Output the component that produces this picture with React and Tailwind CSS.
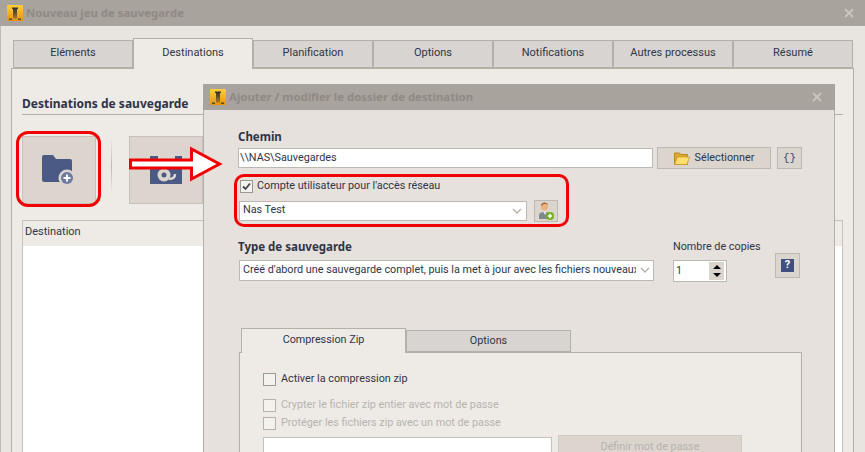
// App.jsx
const body = { fontFamily: 'Roboto, Tahoma, sans-serif' }
const bold = { fontFamily: '"Noto Sans", Tahoma, sans-serif' }

function Logo({ id }) {
  return (
    <svg width="16" height="16" viewBox="0 0 16 16" className="shrink-0">
      <defs>
        <linearGradient id={`${id}Fill`} x1="0" y1="0" x2="0" y2="1">
          <stop offset="0" stopColor="#ffcf3a" />
          <stop offset="1" stopColor="#e8920f" />
        </linearGradient>
        <linearGradient id={`${id}Stem`} x1="0" y1="0" x2="0" y2="1">
          <stop offset="0" stopColor="#2f2e2b" />
          <stop offset="1" stopColor="#a8762a" />
        </linearGradient>
      </defs>
      <rect width="16" height="16" rx="1" fill={`url(#${id}Fill)`} />
      <path d="M5 2.500h6v1.500h-1v9.500h-4v-9.500h-1z" fill={`url(#${id}Stem)`} />
      <path d="M2 13.500h3v1.500h-3zM11 13.500h3v1.500h-3z" fill="#5c4a2a" />
    </svg>
  )
}

function CloseIcon({ className }) {
  return (
    <svg width="10" height="10" viewBox="0 0 10 10" className={className}>
      <path d="M1 1l8 8M9 1l-8 8" stroke="#c9c5bf" strokeWidth="1.800" fill="none" />
    </svg>
  )
}

function Chevron() {
  return (
    <svg width="10" height="6" viewBox="0 0 10 6">
      <path d="M1 1l4 4 4-4" stroke="#b3b0ac" strokeWidth="1.300" fill="none" />
    </svg>
  )
}

function FolderPlus() {
  return (
    <svg width="34" height="30" viewBox="0 0 34 30">
      <path d="M0 2a2 2 0 0 1 2-2h9l3 4h14a2 2 0 0 1 2 2v20a1 1 0 0 1-1 1H2a2 2 0 0 1-2-2z" fill="#4a5a85" />
      <circle cx="25" cy="23" r="8.500" fill="#dcd5ce" />
      <circle cx="25" cy="23" r="6" fill="#6d7ba0" />
      <path d="M25 19.500v7M21.500 23h7" stroke="#fff" strokeWidth="2" />
    </svg>
  )
}

function Floppy() {
  return (
    <svg width="32" height="28" viewBox="0 0 32 28">
      <path d="M0 0h32v28H0z" fill="#4a5a85" />
      <path d="M8 0h17v8H8z" fill="#dcd5ce" />
      <circle cx="14" cy="19" r="6.500" fill="#dcd5ce" />
      <circle cx="14" cy="19" r="2.500" fill="#4a5a85" />
      <path d="M19 23c3 0 6-1 6-5" stroke="#dcd5ce" strokeWidth="2.500" fill="none" />
    </svg>
  )
}

function FolderYellow() {
  return (
    <svg width="16" height="13" viewBox="0 0 16 13" className="shrink-0">
      <path d="M0.500 1h5l1.500 1.500h6.500v10h-13z" fill="#dba92c" stroke="#b9871a" />
      <path d="M3.500 5h12l-2.500 7.500h-12.500z" fill="#ffdf70" stroke="#c99a25" strokeWidth="0.800" />
    </svg>
  )
}

function UserAdd() {
  return (
    <svg width="16" height="18" viewBox="0 0 16 18">
      <path d="M1 17v-4c0-2 2-3 6-3s5 1 5 3v4z" fill="#7d8a8c" />
      <path d="M5.500 10h3l-1.500 3z" fill="#eee" />
      <circle cx="6.500" cy="5" r="3.500" fill="#eab27c" />
      <path d="M3 4.500c0-3 1.500-4 3.500-4s3.500 1 3.500 3l-1.500-1.500h-3z" fill="#a0652e" />
      <circle cx="12" cy="14" r="4" fill="#6fae1c" />
      <path d="M12 11.800v4.400M9.800 14h4.400" stroke="#fff" strokeWidth="1.500" />
    </svg>
  )
}

function Checkbox({ checked, muted }) {
  return (
    <span className={`flex w-[13px] h-[13px] shrink-0 items-center justify-center border bg-[#f4f2ef] ${muted ? 'border-[#b5b1ac]' : 'border-[#9c9892]'}`}>
      {checked && (
        <svg width="11" height="11" viewBox="0 0 11 11">
          <path d="M2 5.500l2.500 2.500 4.500-5.500" stroke="#44464f" strokeWidth="1.800" fill="none" />
        </svg>
      )}
    </span>
  )
}

const mainTabs = ['Eléments', 'Destinations', 'Planification', 'Options', 'Notifications', 'Autres processus', 'Résumé']

function MainWindow() {
  return (
    <div className="flex h-[452px] flex-col bg-[#e8e4df]">
      <div className="flex h-[26px] shrink-0 items-center bg-[#a8a39c] pl-[7px] pr-[11px]">
        <Logo id="mainLogo" />
        <span className="ml-[3px] text-[11.400px] font-bold text-[#8f8a84]" style={bold}>Nouveau jeu de sauvegarde</span>
        <CloseIcon className="ml-auto" />
      </div>
      <div className="flex flex-1 flex-col overflow-hidden border-l border-[#bdb9b3] pl-[10px] pr-[11px] pt-[11px]">
        <div className="z-10 flex h-[31px] shrink-0 items-end pl-[2px] text-[11px] text-[#2f3446]">
          {mainTabs.map((tab) => tab === 'Destinations' ? (
            <div key={tab} className="-mb-px flex h-[31px] w-[120px] justify-center border-x border-t border-[#b3afa9] bg-[#eeebe7] pt-[6px]">{tab}</div>
          ) : (
            <div key={tab} className="flex h-[28px] w-[120px] items-center justify-center border-x border-t border-b border-[#b3afa9] bg-[#d7d4d1] pb-[2px]">{tab}</div>
          ))}
        </div>
        <div className="flex-1 border border-[#b3afa9] bg-[#eeebe7] pl-[10px] pr-[10px]">
          <div className="mt-[26px] h-[20px] border-b border-[#b3afa9] text-[12px] font-bold leading-[18px] text-[#2f3446]" style={bold}>
            Destinations de sauvegarde
          </div>
          <div className="mt-[21px] flex items-start">
            <div className="flex h-[68px] w-[74px] items-center justify-center border border-[#c6c1bb] bg-[#dcd5ce]"><FolderPlus /></div>
            <div className="ml-[15px] mt-[2px] h-[56px] w-px bg-gradient-to-b from-transparent via-[#bdb9b3] to-transparent" />
            <div className="ml-[17px] flex h-[68px] w-[74px] items-center justify-center border border-[#c6c1bb] bg-[#dcd5ce]"><Floppy /></div>
          </div>
          <div className="mt-[16px] flex h-[300px] flex-col border border-[#c6c1bb]">
            <div className="flex h-[25px] shrink-0 items-center pl-[2px] pb-[2px] text-[11px] text-[#2f3446]">Destination</div>
            <div className="flex-1 bg-white" />
          </div>
        </div>
      </div>
    </div>
  )
}

function SubDialog() {
  return (
    <div className="absolute left-[203px] top-[84px] flex h-[368px] w-[632px] flex-col overflow-hidden text-[10.800px] text-[#2f3446]">
      <div className="flex h-[26px] shrink-0 items-center bg-[#a8a39c] pl-[7px] pr-[13px]">
        <Logo id="dialogLogo" />
        <span className="ml-[3px] text-[11.400px] font-bold text-[#8f8a84]" style={bold}>Ajouter / modifier le dossier de destination</span>
        <CloseIcon className="ml-auto" />
      </div>
      <div className="flex-1 border-x border-[#b3afa9] bg-[#e6e1dc] pl-[34px] pr-[32px]">
        <div className="mt-[20px] text-[11.500px] font-bold leading-[14px]" style={bold}>Chemin</div>

        <div className="mt-[3px] flex h-[22px] items-center">
          <div className="flex h-[20px] w-[415px] items-center border border-[#bcb8b2] bg-white pl-[1px]">\\NAS\Sauvegardes</div>
          <div className="ml-[4px] flex h-[22px] w-[114px] items-center justify-center gap-[5px] border border-[#bcb8b2] bg-[#dcd5ce]">
            <FolderYellow />
            <span>Sélectionner</span>
          </div>
          <div className="ml-[6px] flex h-[22px] w-[25px] items-center justify-center border border-[#bcb8b2] bg-[#dcd5ce] font-['Liberation_Mono'] text-[#2f4a78]">{'{}'}</div>
        </div>

        <div className="mt-[11px] flex h-[13px] items-center gap-[4px] pl-[2px]">
          <Checkbox checked />
          <span>Compte utilisateur pour l'accès réseau</span>
        </div>

        <div className="mt-[7px] flex h-[22px] items-center pl-px">
          <div className="flex h-[20px] w-[288px] items-center border border-[#bcb8b2] bg-white pb-px pl-[3px]">
            <span className="flex-1">Nas Test</span>
            <span className="flex w-[18px] justify-center"><Chevron /></span>
          </div>
          <div className="ml-[7px] flex h-[22px] w-[24px] items-center justify-center border border-[#bcb8b2] bg-[#dcd5ce]"><UserAdd /></div>
        </div>

        <div className="mt-[18px] flex">
          <div className="w-[435px]">
            <div className="text-[11.500px] font-bold leading-[14px]" style={bold}>Type de sauvegarde</div>
            <div className="mt-[6px] ml-px flex h-[21px] w-[415px] items-center border border-[#bcb8b2] bg-white pb-px pl-[3px]">
              <span className="w-[393px] overflow-hidden whitespace-nowrap">Créé d'abord une sauvegarde complet, puis la met à jour avec les fichiers nouveaux</span>
              <span className="flex flex-1 justify-center"><Chevron /></span>
            </div>
          </div>
          <div className="w-[102px]">
            <div className="whitespace-nowrap leading-[14px]">Nombre de copies</div>
            <div className="mt-[6px] flex h-[22px] w-[54px] items-center border border-[#bcb8b2] bg-white pl-[2px] pr-[2px]">
              <span className="flex-1">1</span>
              <span className="flex h-[18px] w-[15px] flex-col items-center justify-evenly bg-[#dcd5ce]">
                <span className="h-0 w-0 border-x-[4px] border-b-[4px] border-x-transparent border-b-black" />
                <span className="h-0 w-0 border-x-[4px] border-t-[4px] border-x-transparent border-t-black" />
              </span>
            </div>
          </div>
          <div className="mt-[13px] flex h-[25px] w-[25px] items-center justify-center border border-[#bcb8b2] bg-[#dcd5ce]">
            <span className="flex h-[13px] w-[13px] items-center justify-center bg-[#3f4f80] text-[11px] font-bold text-white">?</span>
          </div>
        </div>

        <div className="mt-[46px] ml-[3px] flex h-[24px] items-end">
          <div className="-mb-px h-[25px] w-[165px] border-x border-t border-[#b3afa9] bg-[#eeebe7] pt-[3px] text-center">Compression Zip</div>
          <div className="flex h-[22px] w-[165px] items-center justify-center border border-[#b3afa9] bg-[#d7d4d1]">Options</div>
        </div>
        <div className="ml-px h-[120px] border border-[#b3afa9] bg-[#eeebe7] pl-[23px]">
          <div className="mt-[19px] flex h-[14px] items-center gap-[2px]">
            <Checkbox />
            <span className="ml-[3px]">Activer la compression zip</span>
          </div>
          <div className="mt-[12px] flex h-[14px] items-center gap-[2px] text-[#b6b3af]">
            <Checkbox muted />
            <span className="ml-[3px]">Crypter le fichier zip entier avec mot de passe</span>
          </div>
          <div className="mt-[4px] flex h-[14px] items-center gap-[2px] text-[#b6b3af]">
            <Checkbox muted />
            <span className="ml-[3px]">Protéger les fichiers zip avec un mot de passe</span>
          </div>
          <div className="mt-[5px] flex items-start">
            <div className="mt-[2px] h-[30px] w-[289px] border border-[#c6c1bb] bg-white" />
            <div className="ml-[6px] flex h-[30px] w-[184px] justify-center border border-[#cfcac4] bg-[#dcd5ce] pt-[3px] text-[#b6b3af]">Définir mot de passe</div>
          </div>
        </div>
      </div>
    </div>
  )
}

function Annotations() {
  return (
    <>
      <div className="absolute left-[16px] top-[131px] h-[76px] w-[85px] rounded-[12px] border-[3px] border-[#f00000]" />
      <div className="absolute left-[234px] top-[174px] h-[53px] w-[335px] rounded-[10px] border-[3px] border-[#f00000]" />
      <svg width="100" height="40" viewBox="0 0 100 40" className="absolute left-[127px] top-[144px]">
        <path d="M3.500 16h61V5l28 15-28 15V24h-61z" fill="#fff" stroke="#f00000" strokeWidth="3" />
      </svg>
    </>
  )
}

export default function App() {
  return (
    <div className="relative h-[452px] w-[865px] overflow-hidden" style={body}>
      <MainWindow />
      <SubDialog />
      <Annotations />
    </div>
  )
}
